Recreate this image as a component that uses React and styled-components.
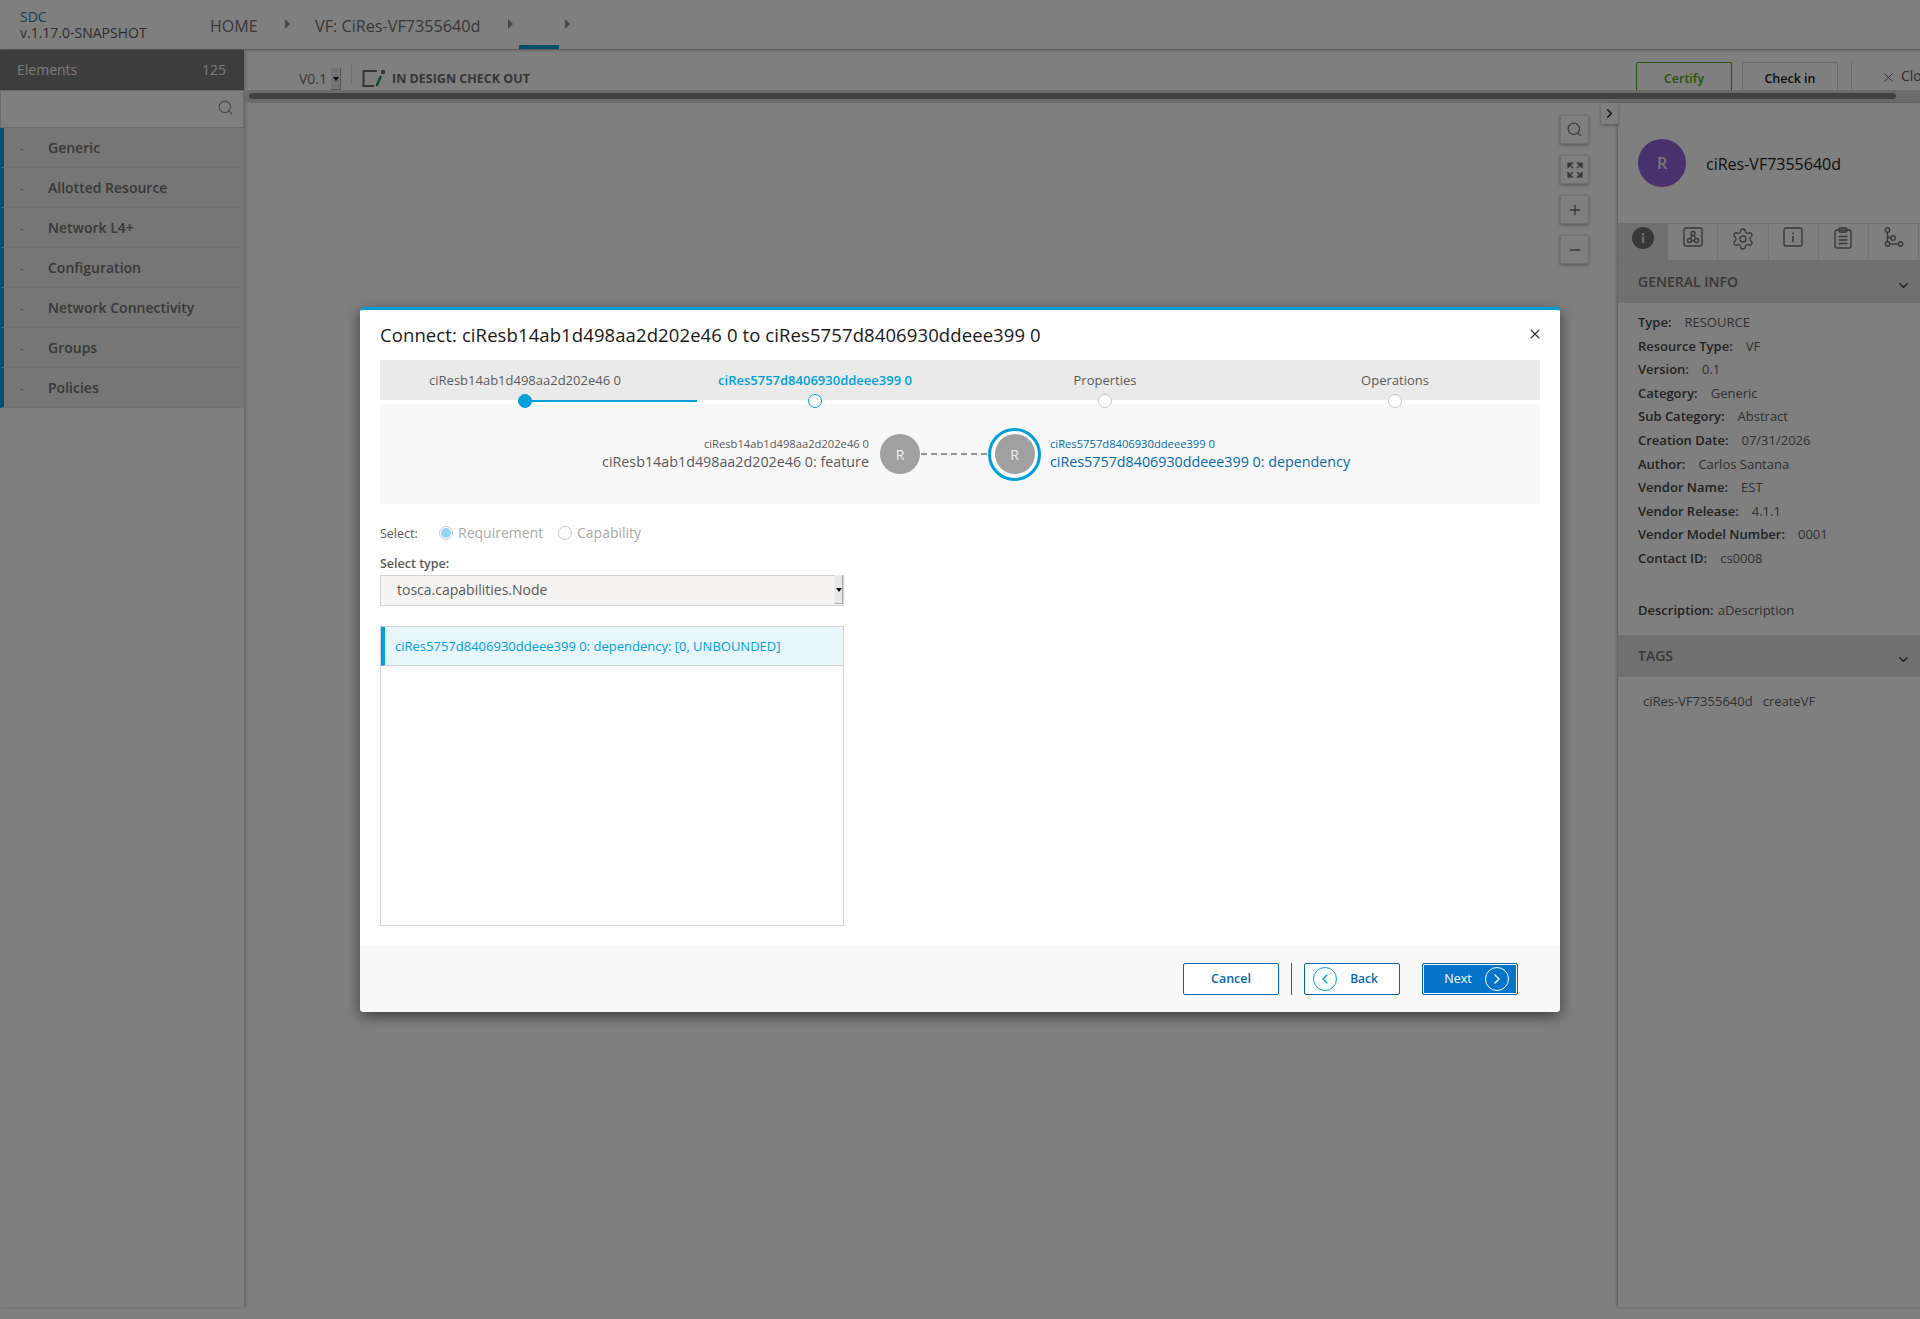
import React from 'react';
import styled, { createGlobalStyle } from 'styled-components';
import { Search, X, ChevronRight, ChevronLeft, ChevronDown, Plus, Minus, Settings } from 'lucide-react';

const GlobalStyle = createGlobalStyle`
  html, body {
    margin: 0;
    padding: 0;
    background: #fff;
    font-family: 'Open Sans', 'Liberation Sans', sans-serif;
  }
  * { box-sizing: border-box; }
`;

const Page = styled.div`
  width: 1920px;
  height: 1319px;
  overflow: hidden;
  position: relative;
  color: #5a5a5a;
`;

const Shell = styled.div`
  height: 1307px;
  display: flex;
  flex-direction: column;
`;

// top bar
const Header = styled.header`
  height: 50px;
  flex: none;
  display: flex;
  align-items: stretch;
  border-bottom: 1px solid #b8b8b8;
  box-shadow: 0 1px 2px rgba(0, 0, 0, 0.15);
`;

const Brand = styled.div`
  width: 210px;
  padding: 9px 0 0 20px;
  font-size: 14px;
  line-height: 16px;
  color: #5a5a5a;
  b {
    display: block;
    font-weight: 400;
    color: #2a7ab8;
  }
`;

const Crumb = styled.div`
  position: relative;
  width: ${(p) => p.$w}px;
  font-size: ${(p) => p.$size || 16}px;
  line-height: 52px;
  color: #6e6e6e;
  white-space: nowrap;
`;

const CrumbArrow = styled.span`
  position: absolute;
  right: ${(p) => p.$right}px;
  top: 19px;
  border-left: 5px solid #8a8a8a;
  border-top: 5px solid transparent;
  border-bottom: 5px solid transparent;
`;

const CrumbActive = styled.span`
  position: absolute;
  left: 6px;
  bottom: 0;
  width: 40px;
  height: 4px;
  background: #009fdb;
`;

const Body = styled.div`
  flex: 1;
  display: flex;
  min-height: 0;
`;

// left palette
const Sidebar = styled.aside`
  width: 245px;
  flex: none;
  border-right: 1px solid #d8d8d8;
  box-shadow: 1px 0 3px rgba(0, 0, 0, 0.2);
`;

const ElementsHead = styled.div`
  height: 40px;
  padding: 0 18px 2px 17px;
  display: flex;
  align-items: center;
  justify-content: space-between;
  background: #7a7a7a;
  color: #f4f4f4;
  font-size: 14px;
`;

const SearchBox = styled.div`
  height: 38px;
  padding: 0 9px 4px 0;
  display: flex;
  align-items: center;
  justify-content: flex-end;
  background: #fff;
  border: 1px solid #d2d2d2;
  color: #8a8a8a;
`;

const Category = styled.div`
  height: 40px;
  display: flex;
  align-items: center;
  background: #ececec;
  border-left: 4px solid #00a5e0;
  border-bottom: 1px solid #e0e0e0;
  font-size: 14px;
  font-weight: 600;
  color: #707070;
  span {
    width: 44px;
    padding-left: 16px;
    font-size: 10px;
    font-weight: 400;
    color: #959595;
  }
`;

// work area
const Main = styled.div`
  flex: 1;
  min-width: 0;
  display: flex;
  flex-direction: column;
`;

const Toolbar = styled.div`
  height: 40px;
  flex: none;
  position: relative;
  display: flex;
  align-items: flex-end;
  padding-left: 54px;
`;

const Version = styled.div`
  font-size: 14px;
  line-height: 22px;
  width: 32px;
  color: #707070;
`;

const NativeArrow = styled.div`
  width: ${(p) => p.$w || 10}px;
  height: ${(p) => p.$h || 22}px;
  flex: none;
  display: flex;
  align-items: center;
  justify-content: center;
  background: #e8e8e8;
  border: 1px solid #a8a8a8;
  border-left-color: #eee;
  border-top-color: #eee;
  &::after {
    content: '';
    border-top: 4px solid #111;
    border-left: 3px solid transparent;
    border-right: 3px solid transparent;
  }
`;

const ToolDivider = styled.div`
  width: 1px;
  height: 20px;
  align-self: flex-start;
  margin: 14px 10px 0 10px;
  background: #d8d8d8;
`;

const StateLabel = styled.div`
  display: flex;
  align-items: center;
  gap: 6px;
  height: 24px;
  font-size: 12.5px;
  font-weight: 700;
  color: #6a6a6a;
  white-space: nowrap;
`;

const ToolActions = styled.div`
  position: absolute;
  right: 0;
  top: 12px;
  height: 28px;
  width: 284px;
  display: flex;
  overflow: hidden;
`;

const TabButton = styled.div`
  width: 96px;
  height: 28px;
  flex: none;
  margin-right: 10px;
  padding-top: 3px;
  display: flex;
  align-items: center;
  justify-content: center;
  border: 1px solid ${(p) => (p.$green ? '#4ca90c' : '#d2d2d2')};
  border-bottom: 0;
  border-radius: 2px 2px 0 0;
  font-size: 12.5px;
  font-weight: 600;
  color: ${(p) => (p.$green ? '#4ca90c' : '#1a1a1a')};
`;

const CloseLink = styled.div`
  flex: none;
  margin-left: 3px;
  padding-left: 49px;
  border-left: 1px solid #d8d8d8;
  height: 28px;
  position: relative;
  font-size: 14px;
  line-height: 28px;
  color: #5a5a5a;
  svg {
    position: absolute;
    left: 29px;
    top: 8px;
  }
`;

const ScrollBand = styled.div`
  height: 13px;
  flex: none;
  padding: 3px 24px 4px 4px;
  background: #d8d8d8;
  i {
    display: block;
    height: 6px;
    border-radius: 3px;
    background: #838383;
  }
`;

const Workspace = styled.div`
  flex: 1;
  display: flex;
  min-height: 0;
`;

const Canvas = styled.div`
  flex: 1;
  position: relative;
  padding: 12px 29px 0 0;
  display: flex;
  flex-direction: column;
  align-items: flex-end;
  gap: 11px;
`;

const ZoomButton = styled.div`
  width: 29px;
  height: 29px;
  display: flex;
  align-items: center;
  justify-content: center;
  background: #fff;
  border: 1px solid #e0e0e0;
  box-shadow: 0 1px 3px rgba(0, 0, 0, 0.35);
  color: #707070;
`;

const Toggler = styled.div`
  position: absolute;
  right: 0;
  top: 0;
  width: 17px;
  height: 21px;
  display: flex;
  align-items: center;
  justify-content: center;
  background: #fff;
  box-shadow: 0 1px 3px rgba(0, 0, 0, 0.35);
  color: #111;
`;

// right details panel
const Details = styled.aside`
  width: 302px;
  flex: none;
  box-shadow: -1px 0 3px rgba(0, 0, 0, 0.3);
  overflow: hidden;
`;

const DetailsTop = styled.div`
  height: 120px;
  padding: 36px 0 0 20px;
  display: flex;
  align-items: flex-start;
  gap: 20px;
  font-size: 16px;
  line-height: 51px;
  color: #222;
`;

const Avatar = styled.div`
  width: 48px;
  height: 48px;
  border-radius: 50%;
  display: flex;
  align-items: center;
  justify-content: center;
  background: #9163d8;
  color: #f0f0f0;
  font-size: 16px;
  line-height: 48px;
  font-weight: 600;
`;

const IconTabs = styled.div`
  height: 38px;
  display: flex;
  border-top: 1px solid #dedede;
  border-bottom: 1px solid #dedede;
`;

const IconTab = styled.div`
  width: 50.2px;
  flex: none;
  display: flex;
  align-items: flex-start;
  justify-content: center;
  padding-top: 3px;
  background: ${(p) => (p.$active ? '#e0e0e0' : '#fff')};
  border-right: 1px solid #e4e4e4;
  color: #707070;
`;

const SectionHead = styled.div`
  height: 42px;
  display: flex;
  align-items: center;
  justify-content: space-between;
  padding: 0 9px 2px 20px;
  background: #e0e0e0;
  font-size: 14px;
  font-weight: 600;
  color: #707070;
  svg {
    color: #222;
    margin-top: 8px;
  }
`;

const InfoList = styled.div`
  padding: 8px 0 0 20px;
  height: 332px;
`;

const InfoRow = styled.div`
  height: 23.6px;
  font-size: 13px;
  line-height: 23.6px;
  color: #606060;
  white-space: nowrap;
  b {
    font-weight: 600;
    color: #444;
    margin-right: ${(p) => (p.$tight ? 4 : 13)}px;
  }
`;

const DescriptionRow = styled(InfoRow)`
  margin-top: 28px;
`;

const Tags = styled.div`
  padding: 14px 0 0 25px;
  display: flex;
  gap: 10px;
  font-size: 13px;
  line-height: 20px;
  color: #606060;
`;

// modal
const Overlay = styled.div`
  position: absolute;
  inset: 0;
  background: rgba(0, 0, 0, 0.5);
  display: flex;
  justify-content: center;
  align-items: flex-start;
  padding-top: 307px;
`;

const Modal = styled.div`
  width: 1200px;
  height: 705px;
  display: flex;
  flex-direction: column;
  background: #fff;
  border-top: 3px solid #009fdb;
  border-radius: 4px;
  box-shadow: 0 4px 14px rgba(0, 0, 0, 0.5);
  overflow: hidden;
`;

const ModalTop = styled.div`
  height: 50px;
  flex: none;
  padding: 0 17px 2px 20px;
  display: flex;
  align-items: center;
  justify-content: space-between;
  font-size: 18.5px;
  letter-spacing: 0.1px;
  color: #191919;
`;

const ModalBody = styled.div`
  flex: 1;
  padding: 0 20px;
`;

const Steps = styled.div`
  height: 40px;
  display: grid;
  grid-template-columns: repeat(4, 1fr);
  background: #eaeaea;
`;

const Step = styled.div`
  position: relative;
  text-align: center;
  padding-top: 10px;
  font-size: 13px;
  line-height: 20px;
  color: ${(p) => (p.$current ? '#009fdb' : '#5a5a5a')};
  font-weight: ${(p) => (p.$current ? 600 : 400)};
`;

const StepDot = styled.span`
  position: absolute;
  left: 50%;
  top: 34px;
  width: 14px;
  height: 14px;
  margin-left: -7px;
  border-radius: 50%;
  z-index: 1;
  background: ${(p) => (p.$kind === 'done' ? '#009fdb' : '#fff')};
  border: ${(p) => (p.$kind === 'current' ? 1.5 : 1)}px solid ${(p) => (p.$kind === 'todo' ? '#c8c8c8' : '#009fdb')};
`;

const StepLine = styled.span`
  position: absolute;
  left: 50%;
  top: 40px;
  width: 172px;
  height: 2px;
  background: #009fdb;
`;

const Connection = styled.div`
  height: 100px;
  margin-top: 4px;
  display: grid;
  grid-template-columns: 500px 40px 68px 53px 1fr;
  align-items: center;
  background: #f8f8f8;
`;

const NodeText = styled.div`
  padding: ${(p) => (p.$right ? '0 0 0 9px' : '0 11px 0 0')};
  text-align: ${(p) => (p.$right ? 'left' : 'right')};
  color: ${(p) => (p.$right ? '#0568ae' : '#5a5a5a')};
  small {
    display: block;
    font-size: 11.2px;
    line-height: 16px;
  }
  div {
    font-size: 14.3px;
    line-height: 20px;
    font-weight: 500;
  }
`;

const NodeCircle = styled.div`
  width: 40px;
  height: 40px;
  border-radius: 50%;
  display: flex;
  align-items: center;
  justify-content: center;
  background: #a0a0a0;
  color: #f0f0f0;
  font-size: 14px;
`;

const NodeRing = styled.div`
  width: 53px;
  height: 53px;
  border-radius: 50%;
  display: flex;
  align-items: center;
  justify-content: center;
  border: 3px solid #009fdb;
  background: #fff;
`;

const Dashes = styled.div`
  height: 2px;
  margin: 0 1px;
  background: repeating-linear-gradient(90deg, #959595 0 6px, transparent 6px 10px);
`;

const SelectRow = styled.div`
  display: flex;
  align-items: center;
  margin-top: 19px;
  height: 20px;
  font-size: 12.5px;
  color: #5a5a5a;
`;

const SelectCaption = styled.div`
  width: 59px;
`;

const Radio = styled.span`
  width: 14px;
  height: 14px;
  flex: none;
  border-radius: 50%;
  border: 1px solid #c8c8c8;
  background: #fff;
  display: flex;
  align-items: center;
  justify-content: center;
  &::after {
    content: '';
    display: ${(p) => (p.$on ? 'block' : 'none')};
    width: 10px;
    height: 10px;
    border-radius: 50%;
    background: #92d7f0;
  }
`;

const RadioLabel = styled.span`
  width: ${(p) => p.$w}px;
  padding: 0 0 1px 5px;
  font-size: 14px;
  line-height: 18px;
  color: #a8a8a8;
`;

const TypeLabel = styled.div`
  margin-top: 11px;
  height: 20px;
  font-size: 12.5px;
  line-height: 20px;
  font-weight: 600;
  color: #5a5a5a;
`;

const TypeSelect = styled.div`
  width: 464px;
  height: 31px;
  margin-top: 1px;
  padding: 0 0 2px 16px;
  display: flex;
  align-items: center;
  justify-content: space-between;
  background: #f5f4f3;
  border: 1px solid #d2d2d2;
  font-size: 14px;
  color: #5a5a5a;
`;

const TypeList = styled.div`
  width: 464px;
  height: 300px;
  margin-top: 20px;
  border: 1px solid #d2d2d2;
`;

const TypeItem = styled.div`
  height: 39px;
  padding-left: 10px;
  display: flex;
  align-items: center;
  background: #e6f6fb;
  border-left: 4px solid #009fdb;
  border-bottom: 1px solid #d2d2d2;
  font-size: 13px;
  color: #009fdb;
`;

const Footer = styled.div`
  height: 66px;
  flex: none;
  padding: 17px 42px 0 0;
  display: flex;
  justify-content: flex-end;
  align-items: flex-start;
  background: #f8f8f8;
`;

const FootButton = styled.div`
  width: 96px;
  height: 32px;
  position: relative;
  padding-bottom: 2px;
  display: flex;
  align-items: center;
  justify-content: center;
  border-radius: 2px;
  font-size: 12.5px;
  font-weight: 600;
  background: ${(p) => (p.$primary ? '#0574c9' : '#fff')};
  color: ${(p) => (p.$primary ? '#fff' : '#0568ae')};
  border: 1px solid #0568ae;
  margin-left: ${(p) => (p.$primary ? 22 : 0)}px;
  ${(p) => p.$primary && 'box-shadow: inset 0 0 0 1px #fff; font-weight: 500; padding-right: 24px;'}
  ${(p) => p.$back && 'padding-left: 24px; font-size: 12px;'}
`;

const FootDivider = styled.div`
  width: 1px;
  height: 32px;
  margin: 0 12px;
  background: #0568ae;
`;

const RoundIcon = styled.span`
  position: absolute;
  top: 3px;
  ${(p) => (p.$side === 'left' ? 'left: 8px;' : 'right: 8px;')}
  width: 24px;
  height: 24px;
  border-radius: 50%;
  display: flex;
  align-items: center;
  justify-content: center;
  border: 1px solid ${(p) => (p.$light ? '#fff' : '#009fdb')};
  color: ${(p) => (p.$light ? '#fff' : '#009fdb')};
`;

const categories = ['Generic', 'Allotted Resource', 'Network L4+', 'Configuration', 'Network Connectivity', 'Groups', 'Policies'];

const info = [
  ['Type:', 'RESOURCE'],
  ['Resource Type:', 'VF'],
  ['Version:', '0.1'],
  ['Category:', 'Generic'],
  ['Sub Category:', 'Abstract'],
  ['Creation Date:', '07/31/2026'],
  ['Author:', 'Carlos Santana'],
  ['Vendor Name:', 'EST'],
  ['Vendor Release:', '4.1.1'],
  ['Vendor Model Number:', '0001'],
  ['Contact ID:', 'cs0008'],
];

const CheckoutIcon = () => (
  <svg width="24" height="18" viewBox="0 0 24 18" fill="none">
    <path d="M15 2H1.5V17H12" stroke="#6a6a6a" strokeWidth="2" />
    <rect x="19" y="1" width="4" height="4" fill="#6a6a6a" />
    <path d="M19 7L14.5 17" stroke="#1f9a4a" strokeWidth="2.4" />
  </svg>
);

const FitIcon = () => (
  <svg width="16" height="16" viewBox="0 0 16 16" fill="#707070" stroke="#707070" strokeWidth="1.2">
    <path d="M1 1h4.5L1 5.5zM15 1v4.5L10.5 1zM1 15v-4.5L5.5 15zM15 15h-4.5L15 10.5z" />
    <path d="M2 2l4 4M14 2l-4 4M2 14l4-4M14 14l-4-4" fill="none" />
  </svg>
);

const InfoSolid = () => (
  <svg width="22" height="22" viewBox="0 0 22 22">
    <circle cx="11" cy="11" r="11" fill="#707070" />
    <rect x="9.8" y="9.5" width="2.4" height="6.5" fill="#d8d8d8" />
    <rect x="9.8" y="6" width="2.4" height="2.4" fill="#d8d8d8" />
  </svg>
);

const CompositionIcon = () => (
  <svg width="20" height="20" viewBox="0 0 20 20" fill="none" stroke="#707070" strokeWidth="1.4">
    <rect x="1" y="1" width="18" height="18" rx="2" />
    <circle cx="10" cy="6.5" r="2" />
    <circle cx="6.5" cy="13.5" r="2" />
    <circle cx="13.5" cy="13.5" r="2" />
    <path d="M9 8.4l-1.6 3.2M11 8.4l1.6 3.2M8.5 13.5h3" />
  </svg>
);

const InfoBoxIcon = () => (
  <svg width="20" height="20" viewBox="0 0 20 20" fill="none" stroke="#707070" strokeWidth="1.4">
    <rect x="1" y="1" width="18" height="18" rx="2" />
    <path d="M10 9v6M10 5.5v1.5" strokeWidth="1.6" />
  </svg>
);

const ClipboardIcon = () => (
  <svg width="18" height="22" viewBox="0 0 18 22" fill="none" stroke="#707070" strokeWidth="1.4">
    <rect x="1" y="3" width="16" height="18" rx="2" />
    <rect x="5" y="1" width="8" height="4" rx="1" />
    <path d="M4.5 9.5h9M4.5 13h9M4.5 16.5h9" />
  </svg>
);

const BranchIcon = () => (
  <svg width="20" height="22" viewBox="0 0 20 22" fill="none" stroke="#707070" strokeWidth="1.4">
    <circle cx="3.5" cy="3" r="2.2" />
    <circle cx="3.5" cy="17" r="2.2" />
    <circle cx="16.5" cy="17" r="2.2" />
    <circle cx="9" cy="11" r="2.2" />
    <path d="M3.5 5.2v9.6M5.7 17h8.6M3.5 8.5c0 1.8 1.5 2.5 3.3 2.5" />
  </svg>
);

const App = () => (
  <Page>
    <GlobalStyle />
    <Shell>
      <Header>
        <Brand>
          <b>SDC</b>
          v.1.17.0-SNAPSHOT
        </Brand>
        <Crumb $w={105}>
          HOME
          <CrumbArrow $right={25} />
        </Crumb>
        <Crumb $w={198} $size={16.2}>
          VF: CiRes-VF7355640d
          <CrumbArrow $right={0} />
        </Crumb>
        <Crumb $w={57}>
          <CrumbActive />
          <CrumbArrow $right={0} />
        </Crumb>
      </Header>
      <Body>
        <Sidebar>
          <ElementsHead>
            <span>Elements</span>
            <span>125</span>
          </ElementsHead>
          <SearchBox>
            <Search size={17} strokeWidth={1.5} />
          </SearchBox>
          {categories.map((name) => (
            <Category key={name}>
              <span>-</span>
              {name}
            </Category>
          ))}
        </Sidebar>
        <Main>
          <Toolbar>
            <Version>V0.1</Version>
            <NativeArrow />
            <ToolDivider />
            <StateLabel>
              <CheckoutIcon />
              IN DESIGN CHECK OUT
            </StateLabel>
            <ToolActions>
              <TabButton $green>Certify</TabButton>
              <TabButton>Check in</TabButton>
              <CloseLink>
                <X size={15} strokeWidth={1.5} />
                Close
              </CloseLink>
            </ToolActions>
          </Toolbar>
          <ScrollBand>
            <i />
          </ScrollBand>
          <Workspace>
            <Canvas>
              <ZoomButton>
                <Search size={17} strokeWidth={1.6} />
              </ZoomButton>
              <ZoomButton>
                <FitIcon />
              </ZoomButton>
              <ZoomButton>
                <Plus size={16} strokeWidth={2} />
              </ZoomButton>
              <ZoomButton>
                <Minus size={16} strokeWidth={2.4} />
              </ZoomButton>
              <Toggler>
                <ChevronRight size={15} strokeWidth={2} />
              </Toggler>
            </Canvas>
            <Details>
              <DetailsTop>
                <Avatar>R</Avatar>
                ciRes-VF7355640d
              </DetailsTop>
              <IconTabs>
                <IconTab $active>
                  <InfoSolid />
                </IconTab>
                <IconTab>
                  <CompositionIcon />
                </IconTab>
                <IconTab>
                  <Settings size={24} strokeWidth={1.3} />
                </IconTab>
                <IconTab>
                  <InfoBoxIcon />
                </IconTab>
                <IconTab>
                  <ClipboardIcon />
                </IconTab>
                <IconTab>
                  <BranchIcon />
                </IconTab>
              </IconTabs>
              <SectionHead>
                GENERAL INFO
                <ChevronDown size={15} strokeWidth={2} />
              </SectionHead>
              <InfoList>
                {info.map(([label, value]) => (
                  <InfoRow key={label}>
                    <b>{label}</b>
                    {value}
                  </InfoRow>
                ))}
                <DescriptionRow $tight>
                  <b>Description:</b>
                  aDescription
                </DescriptionRow>
              </InfoList>
              <SectionHead>
                TAGS
                <ChevronDown size={15} strokeWidth={2} />
              </SectionHead>
              <Tags>
                <span>ciRes-VF7355640d</span>
                <span>createVF</span>
              </Tags>
            </Details>
          </Workspace>
        </Main>
      </Body>
    </Shell>
    <Overlay>
      <Modal>
        <ModalTop>
          Connect: ciResb14ab1d498aa2d202e46 0 to ciRes5757d8406930ddeee399 0
          <X size={16} strokeWidth={1.6} color="#333" />
        </ModalTop>
        <ModalBody>
          <Steps>
            <Step>
              ciResb14ab1d498aa2d202e46 0
              <StepLine />
              <StepDot $kind="done" />
            </Step>
            <Step $current>
              ciRes5757d8406930ddeee399 0
              <StepDot $kind="current" />
            </Step>
            <Step>
              Properties
              <StepDot $kind="todo" />
            </Step>
            <Step>
              Operations
              <StepDot $kind="todo" />
            </Step>
          </Steps>
          <Connection>
            <NodeText>
              <small>ciResb14ab1d498aa2d202e46 0</small>
              <div>ciResb14ab1d498aa2d202e46 0: feature</div>
            </NodeText>
            <NodeCircle>R</NodeCircle>
            <Dashes />
            <NodeRing>
              <NodeCircle>R</NodeCircle>
            </NodeRing>
            <NodeText $right>
              <small>ciRes5757d8406930ddeee399 0</small>
              <div>ciRes5757d8406930ddeee399 0: dependency</div>
            </NodeText>
          </Connection>
          <SelectRow>
            <SelectCaption>Select:</SelectCaption>
            <Radio $on />
            <RadioLabel $w={105}>Requirement</RadioLabel>
            <Radio />
            <RadioLabel $w={90}>Capability</RadioLabel>
          </SelectRow>
          <TypeLabel>Select type:</TypeLabel>
          <TypeSelect>
            tosca.capabilities.Node
            <NativeArrow $w={9} $h={29} />
          </TypeSelect>
          <TypeList>
            <TypeItem>ciRes5757d8406930ddeee399 0: dependency: [0, UNBOUNDED]</TypeItem>
          </TypeList>
        </ModalBody>
        <Footer>
          <FootButton>Cancel</FootButton>
          <FootDivider />
          <FootButton $back>
            <RoundIcon $side="left">
              <ChevronLeft size={16} strokeWidth={2} />
            </RoundIcon>
            Back
          </FootButton>
          <FootButton $primary>
            Next
            <RoundIcon $side="right" $light>
              <ChevronRight size={16} strokeWidth={2} />
            </RoundIcon>
          </FootButton>
        </Footer>
      </Modal>
    </Overlay>
  </Page>
);

export default App;
